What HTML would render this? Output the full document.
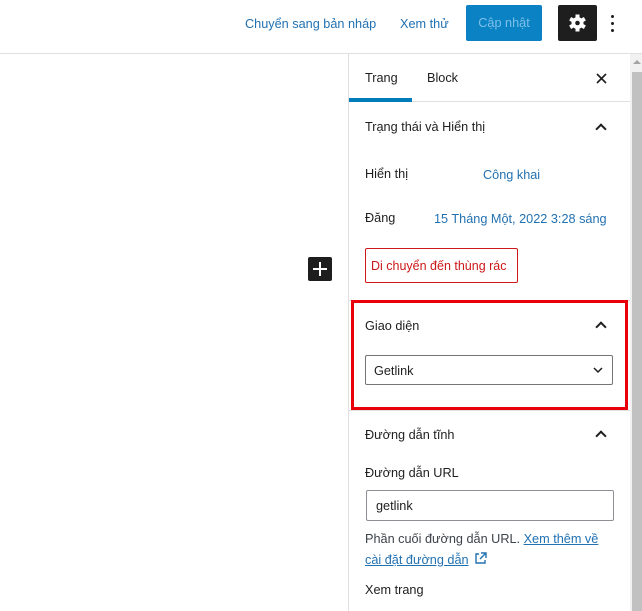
<!DOCTYPE html>
<html><head><meta charset="utf-8"><style>
*{box-sizing:border-box;margin:0;padding:0}
body{width:642px;height:611px;overflow:hidden;background:#fff;font-family:"Liberation Sans",Arial,sans-serif;font-size:12.7px;color:#1e1e1e;position:relative}
.a{position:absolute;white-space:nowrap}
.blue{color:#2271b1}
.chev{position:absolute;width:8px;height:8px;border-left:2px solid #1e1e1e;border-top:2px solid #1e1e1e;transform:rotate(45deg)}
</style></head><body>
<div class="a" style="left:0;top:53px;width:642px;height:1px;background:#e0e0e0"></div>
<div class="a blue" style="left:245px;top:17px">Chuyển sang bản nháp</div>
<div class="a blue" style="left:400px;top:17px">Xem thử</div>
<div class="a" style="left:466px;top:5px;width:76px;height:36px;background:#0b82c4;border-radius:2px;color:#7cc1e8;text-align:center;line-height:37px">Cập nhật</div>
<div class="a" style="left:558px;top:5px;width:39px;height:36px;background:#1e1e1e;border-radius:2px">
<svg width="39" height="36" viewBox="0 0 39 36"><g transform="translate(19.5,18)" fill="#fff"><circle r="6"/><g><rect x="-2" y="-8.5" width="4" height="17"/><rect x="-2" y="-8.5" width="4" height="17" transform="rotate(60)"/><rect x="-2" y="-8.5" width="4" height="17" transform="rotate(120)"/></g><circle r="2.3" fill="#1e1e1e"/></g></svg></div>
<div class="a" style="left:611px;top:15px;width:3px;height:3px;background:#1e1e1e;border-radius:50%;box-shadow:0 7px 0 #1e1e1e,0 14px 0 #1e1e1e"></div>
<div class="a" style="left:630px;top:54px;width:12px;height:557px;background:#f1f1f1"></div>
<div class="a" style="left:632px;top:72px;width:10px;height:539px;background:#c1c1c1"></div>
<div class="a" style="left:633px;top:60px;width:0;height:0;border-left:4px solid transparent;border-right:4px solid transparent;border-bottom:4px solid #a3a3a3"></div>
<div class="a" style="left:348px;top:54px;width:1px;height:557px;background:#e0e0e0"></div>
<div class="a" style="left:349px;top:101px;width:281px;height:1px;background:#e0e0e0"></div>
<div class="a" style="left:349px;top:98px;width:63px;height:4px;background:#007cba"></div>
<div class="a" style="left:365px;top:71px">Trang</div>
<div class="a" style="left:427px;top:71px">Block</div>
<svg class="a" style="left:596px;top:73px" width="11" height="11"><path d="M1 1l9 9M10 1l-9 9" stroke="#1e1e1e" stroke-width="1.6"/></svg>
<div class="a" style="left:365px;top:120px">Trạng thái và Hiển thị</div>
<div class="chev" style="left:597px;top:125px"></div>
<div class="a" style="left:365px;top:167px">Hiển thị</div>
<div class="a blue" style="left:483px;top:168px">Công khai</div>
<div class="a" style="left:365px;top:211px">Đăng</div>
<div class="a blue" style="left:434px;top:212px">15 Tháng Một, 2022 3:28 sáng</div>
<div class="a" style="left:365px;top:248px;width:153px;height:35px;border:1px solid #cc1818;border-radius:2px;color:#cc1818;font-size:12.5px;line-height:35px;padding-left:5px">Di chuyển đến thùng rác</div>
<div class="a" style="left:349px;top:300px;width:281px;height:1px;background:#e0e0e0"></div>
<div class="a" style="left:351px;top:300px;width:277px;height:110px;border:3px solid #e8000b"></div>
<div class="a" style="left:365px;top:319px">Giao diện</div>
<div class="chev" style="left:597px;top:323px"></div>
<div class="a" style="left:365px;top:355px;width:248px;height:30px;border:1px solid #757575;border-radius:2px;padding-left:8px;line-height:30px">Getlink</div>
<svg class="a" style="left:593px;top:366px" width="10" height="8"><path d="M1 2l4 4 4-4" stroke="#1e1e1e" stroke-width="1.5" fill="none"/></svg>
<div class="a" style="left:349px;top:410px;width:281px;height:1px;background:#e0e0e0"></div>
<div class="a" style="left:365px;top:428px">Đường dẫn tĩnh</div>
<div class="chev" style="left:597px;top:432px"></div>
<div class="a" style="left:365px;top:466px">Đường dẫn URL</div>
<div class="a" style="left:366px;top:490px;width:248px;height:31px;border:1px solid #8c8f94;border-radius:2px;padding-left:9px;line-height:30px">getlink</div>
<div class="a" style="left:365px;top:532px;color:#3c434a">Phần cuối đường dẫn URL. <span class="blue" style="text-decoration:underline">Xem thêm về</span></div>
<div class="a" style="left:365px;top:552px"><span class="blue" style="text-decoration:underline">cài đặt đường dẫn</span>
<svg width="13" height="13" style="vertical-align:-1px;margin-left:2px"><path d="M5 2H2v9h9V8M7 1h5v5M12 1L6 7" stroke="#2271b1" stroke-width="1.4" fill="none"/></svg></div>
<div class="a" style="left:365px;top:583px">Xem trang</div>
<div class="a" style="left:308px;top:257px;width:24px;height:24px;background:#1e1e1e;border-radius:2px">
<div class="a" style="left:5px;top:11px;width:14px;height:2px;background:#fff"></div>
<div class="a" style="left:11px;top:5px;width:2px;height:14px;background:#fff"></div></div>
</body></html>
